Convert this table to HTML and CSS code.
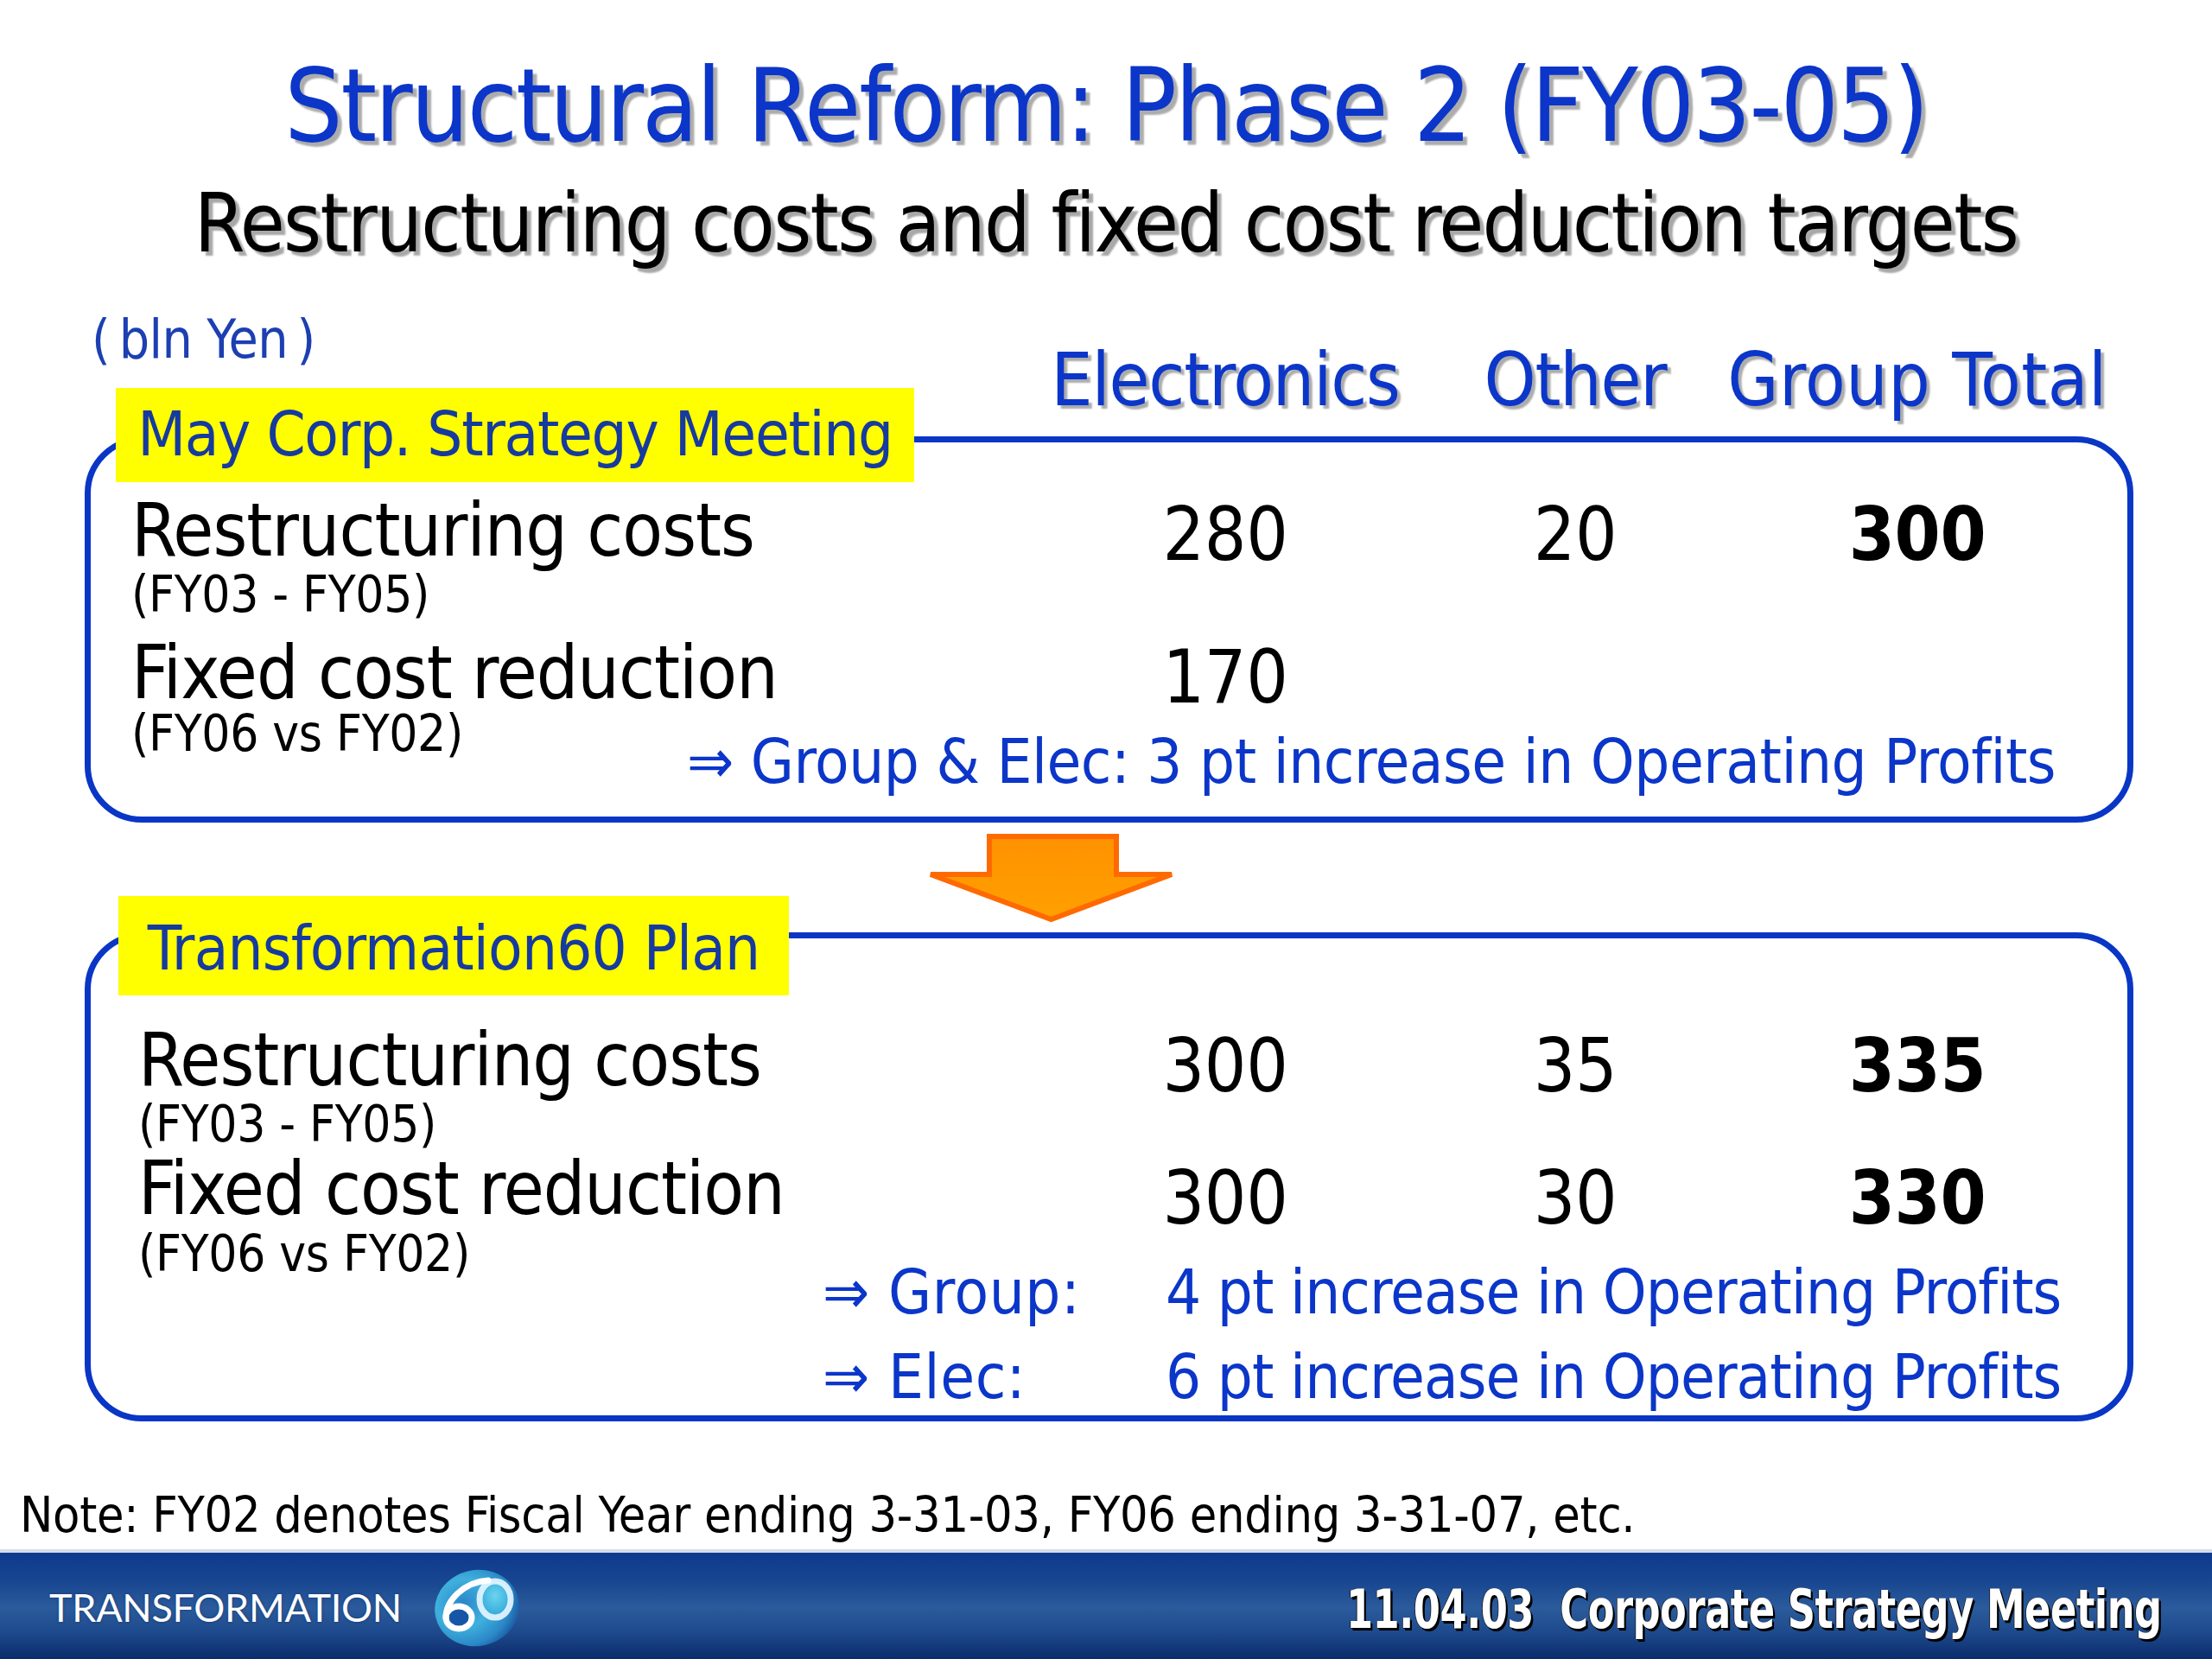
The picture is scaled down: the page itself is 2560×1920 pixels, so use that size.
FILE: index.html
```html
<!DOCTYPE html>
<html lang="en">
<head>
<meta charset="utf-8">
<title>Structural Reform: Phase 2 (FY03-05)</title>
<link rel="stylesheet" href="styles.css">
</head>
<body>
<div class="slide">
  <main class="content">
    <h1 class="title">Structural Reform: Phase 2 (FY03-05)</h1>
    <h2 class="subtitle">Restructuring costs and fixed cost reduction targets</h2>

    <div class="cols head">
      <div class="unit">(&#8201;bln Yen&#8201;)</div>
      <div class="colhead">Electronics</div>
      <div class="colhead">Other</div>
      <div class="colhead colhead-total">Group Total</div>
    </div>

    <section class="panel panel-may">
      <div class="tag tag-may">May Corp. Strategy Meeting</div>
      <div class="item">
        <div class="cols main">
          <div class="lbl">Restructuring costs</div>
          <div class="num">280</div>
          <div class="num">20</div>
          <div class="num total">300</div>
        </div>
        <div class="sub">(FY03 - FY05)</div>
      </div>
      <div class="item item-2">
        <div class="cols main">
          <div class="lbl">Fixed cost reduction</div>
          <div class="num">170</div>
          <div class="num"></div>
          <div class="num total"></div>
        </div>
        <div class="subrow subrow-may">
          <div class="sub">(FY06 vs FY02)</div>
          <div class="result">⇒ Group &amp; Elec: 3 pt increase in Operating Profits</div>
        </div>
      </div>
    </section>

    <div class="arrow">
      <svg viewBox="0 0 287 103" width="287" height="103" aria-hidden="true">
        <defs>
          <linearGradient id="arrowFill" x1="0" y1="0" x2="0" y2="1">
            <stop offset="0" stop-color="#ff9200"/>
            <stop offset="1" stop-color="#ffa000"/>
          </linearGradient>
        </defs>
        <path d="M72 3 H219 V47 H283 L143.5 99 L4 47 H72 Z" fill="url(#arrowFill)" stroke="#ff6a00" stroke-width="6" stroke-linejoin="miter"/>
      </svg>
    </div>

    <section class="panel panel-t60">
      <div class="tag tag-t60">Transformation60 Plan</div>
      <div class="item">
        <div class="cols main">
          <div class="lbl">Restructuring costs</div>
          <div class="num">300</div>
          <div class="num">35</div>
          <div class="num total">335</div>
        </div>
        <div class="sub">(FY03 - FY05)</div>
      </div>
      <div class="item item-2">
        <div class="cols main">
          <div class="lbl">Fixed cost reduction</div>
          <div class="num">300</div>
          <div class="num">30</div>
          <div class="num total">330</div>
        </div>
        <div class="subrow subrow-t60">
          <div class="sub">(FY06 vs FY02)</div>
          <div class="res-key res-first">⇒ Group:</div>
          <div class="res-val res-first">4 pt increase in Operating Profits</div>
          <div class="res-key res-second">⇒ Elec:</div>
          <div class="res-val res-second">6 pt increase in Operating Profits</div>
        </div>
      </div>
    </section>
  </main>

  <p class="note">Note: FY02 denotes Fiscal Year ending 3-31-03, FY06 ending 3-31-07, etc.</p>

  <footer class="footer">
    <div class="brand">
      <span class="brand-name">TRANSFORMATION</span>
      <svg class="logo" viewBox="0 0 103 95" width="103" height="95" aria-hidden="true">
        <defs>
          <radialGradient id="logoFill" cx="0.35" cy="0.4" r="0.7">
            <stop offset="0" stop-color="#2a86c8"/>
            <stop offset="0.45" stop-color="#3fb0de"/>
            <stop offset="0.8" stop-color="#2a88c6"/>
            <stop offset="1" stop-color="#1a56a0"/>
          </radialGradient>
          <radialGradient id="loopFill" cx="0.5" cy="0.4" r="0.6">
            <stop offset="0" stop-color="#6ad4ee"/>
            <stop offset="1" stop-color="#2fa6da"/>
          </radialGradient>
        </defs>
        <ellipse cx="51" cy="47" rx="49" ry="44" fill="url(#logoFill)" transform="rotate(-12 51 47)"/>
        <ellipse cx="72" cy="37" rx="18" ry="21" fill="url(#loopFill)"/>
        <ellipse cx="30" cy="58" rx="15" ry="13" fill="#1756a6"/>
        <ellipse cx="72" cy="37" rx="18" ry="21" fill="none" stroke="#e4f5ff" stroke-width="7" opacity="0.92"/>
        <path d="M15 58 C15 38 36 17 64 15" fill="none" stroke="#ffffff" stroke-width="7" stroke-linecap="round"/>
        <ellipse cx="30" cy="58" rx="15" ry="13" fill="none" stroke="#ffffff" stroke-width="7"/>
      </svg>
    </div>
    <div class="meeting">11.04.03&nbsp; Corporate Strategy Meeting</div>
  </footer>
</div>
</body>
</html>
```

FILE: styles.css
```css
html, body {
  margin: 0;
  padding: 0;
  background: #ffffff;
}

body {
  font-family: "DejaVu Sans Condensed", "DejaVu Sans", sans-serif;
  font-stretch: condensed;
  letter-spacing: -0.32px;
  color: #000000;
}

.slide {
  width: 2560px;
  height: 1920px;
  display: flex;
  flex-direction: column;
  overflow: hidden;
  background: #ffffff;
}

.content {
  padding-top: 52px;
}

.title {
  margin: 0;
  font-size: 118px;
  line-height: 140px;
  font-weight: normal;
  letter-spacing: -2.15px;
  text-align: center;
  color: #0b36c9;
  text-shadow: 5px 5px 2px #acacac;
}

.subtitle {
  margin: 12px 0 0;
  font-size: 94px;
  line-height: 110px;
  font-weight: normal;
  letter-spacing: -1.6px;
  text-align: center;
  color: #000000;
  text-shadow: 5px 5px 2px #a8a8a8;
}

/* shared column grid: label | Electronics | Other | Group Total */
.cols {
  display: grid;
  grid-template-columns: 1113px 400px 410px 382px;
}

.head {
  margin: 44px 0 0 105px;
  height: 132px;
  align-items: end;
}

.unit {
  align-self: start;
  padding-left: 1px;
  font-size: 62px;
  line-height: 70px;
  letter-spacing: -0.6px;
  color: #1c3fb2;
  white-space: nowrap;
}

.colhead {
  justify-self: center;
  font-size: 85px;
  line-height: 100px;
  letter-spacing: -1.2px;
  color: #0b36c9;
  text-shadow: 4px 4px 2px #acacac;
  white-space: nowrap;
}

.colhead-total {
  letter-spacing: 0.5px;
}

.panel {
  position: relative;
  box-sizing: border-box;
  width: 2371px;
  margin-left: 98px;
  border: 7px solid #0a36c6;
  border-radius: 66px;
}

.panel-may {
  margin-top: 15px;
  padding: 59px 0 24px;
}

.panel-t60 {
  margin-top: 11px;
  padding: 98px 0 1px;
}

.tag {
  position: absolute;
  box-sizing: border-box;
  background: #ffff00;
  color: #163a9e;
  font-size: 72px;
  text-align: center;
  white-space: nowrap;
}

.tag-may {
  left: 29px;
  top: -63px;
  width: 924px;
  height: 109px;
  line-height: 106px;
  letter-spacing: -1.3px;
}

.tag-t60 {
  left: 32px;
  top: -49px;
  width: 776px;
  height: 115px;
  padding-top: 6px;
  line-height: 109px;
  letter-spacing: -0.8px;
}

.main {
  align-items: start;
}

.lbl {
  font-size: 85px;
  line-height: 86px;
  letter-spacing: -0.95px;
  white-space: nowrap;
}

.num {
  font-size: 85px;
  line-height: 86px;
  text-align: center;
  padding-top: 5px;
}

.total {
  font-weight: bold;
}

.sub {
  font-size: 58px;
  line-height: 50px;
  white-space: nowrap;
}

.panel-may .lbl,
.panel-may .sub {
  padding-left: 47px;
}

.panel-t60 .lbl,
.panel-t60 .sub {
  padding-left: 55px;
}

.panel-may .item > .sub {
  margin-top: 1px;
}

.panel-may .item-2 {
  margin-top: 23px;
}

.panel-t60 .item > .sub {
  margin-top: -1px;
}

.panel-t60 .item-2 {
  margin-top: 7px;
}

.panel-t60 .num {
  padding-top: 7px;
}

.panel-t60 .item-2 .num {
  padding-top: 11px;
}

.subrow-may {
  display: flex;
  align-items: flex-start;
  margin-top: -3px;
}

.subrow-may .sub {
  box-sizing: border-box;
  width: 690px;
  flex: none;
}

.result {
  padding-top: 17px;
  font-size: 72px;
  line-height: 80px;
  letter-spacing: -0.5px;
  color: #0b36c9;
  white-space: nowrap;
}

.subrow-t60 {
  display: grid;
  grid-template-columns: 847px 397px 1fr;
  margin-top: -4px;
}

.subrow-t60 .sub {
  grid-column: 1;
  grid-row: 1;
  align-self: start;
}

.res-key,
.res-val {
  font-size: 72px;
  line-height: 98px;
  color: #0b36c9;
  white-space: nowrap;
}

.res-key {
  grid-column: 2;
  letter-spacing: 0.6px;
}

.res-val {
  grid-column: 3;
  letter-spacing: -0.95px;
}

.res-first {
  grid-row: 1;
  padding-top: 20px;
}

.res-second {
  grid-row: 2;
  padding-top: 5px;
  line-height: 88px;
}

.arrow {
  margin: 13px 0 0 1073px;
  width: 287px;
  height: 103px;
}

.arrow svg {
  display: block;
}

.note {
  margin: 75px 0 0 23px;
  font-size: 57px;
  line-height: 66px;
  letter-spacing: -0.27px;
  color: #000000;
}

.footer {
  margin-top: auto;
  flex: none;
  box-sizing: border-box;
  height: 127px;
  border-top: 4px solid #d6dcea;
  background: linear-gradient(to bottom,
    #0e3a8e 0%,
    #17458f 25%,
    #2b5b9c 52%,
    #1d4a8c 75%,
    #0b2b6c 100%);
  display: flex;
  align-items: center;
  justify-content: space-between;
  padding: 0 58px 0 57px;
}

.brand {
  display: flex;
  align-items: center;
  gap: 36px;
}

.brand-name {
  font-family: Lato, "Open Sans", sans-serif;
  font-weight: 400;
  font-stretch: normal;
  font-size: 45px;
  line-height: 46px;
  letter-spacing: -0.3px;
  color: #ffffff;
  text-shadow: 0 0 3px rgba(10, 30, 80, 0.6);
  padding-top: 2px;
}

.logo {
  display: block;
  margin-top: 6px;
}

.meeting {
  font-weight: bold;
  font-size: 63px;
  line-height: 63px;
  letter-spacing: -0.6px;
  color: #ffffff;
  white-space: nowrap;
  padding-top: 7px;
  transform: scaleX(0.79);
  transform-origin: right center;
  text-shadow: 3px 3px 0 #000000, 1px 1px 0 #000000, -1px 0 0 #1a1a1a;
}
```
